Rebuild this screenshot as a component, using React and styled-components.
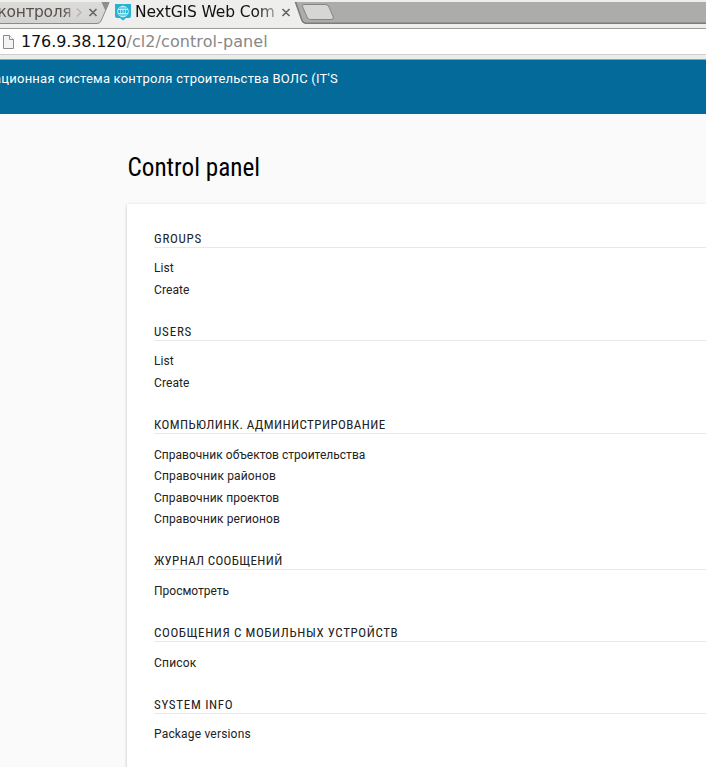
import React from "react";
import styled, { createGlobalStyle } from "styled-components";

const GlobalStyle = createGlobalStyle`
  * { box-sizing: border-box; }
  body { margin: 0; background: #fafafa; font-family: Roboto, sans-serif; overflow: hidden; }
`;

const Window = styled.div`
  width: 706px;
  height: 767px;
  overflow: hidden;
`;

const TabStrip = styled.div`
  position: relative;
  height: 28px;
  background: #eeeeed;
`;

const TabShapes = styled.svg`
  position: absolute;
  inset: 0;
  display: block;
`;

const TabTitle = styled.span`
  position: absolute;
  top: 2px;
  left: ${(p) => p.$left}px;
  width: ${(p) => p.$width}px;
  white-space: nowrap;
  font: 15.5px/20px "DejaVu Sans", sans-serif;
  letter-spacing: ${(p) => p.$spacing || 0}px;
  color: ${(p) => p.$color};
  mask-image: linear-gradient(to right, #000 calc(100% - ${(p) => p.$fade}px), rgba(0, 0, 0, 0.3));
`;

const AddressBar = styled.div`
  display: flex;
  align-items: center;
  height: 27px;
  padding-left: 2px;
  border-top: 1px solid #9b9b9a;
  border-bottom: 1px solid #cfcfce;
  background: #fff;
`;

const Url = styled.div`
  margin-left: 6px;
  font: 16px/24px "DejaVu Sans", sans-serif;
  letter-spacing: 0.08px;
  color: #888;
  white-space: nowrap;
`;

const Host = styled.span`
  letter-spacing: -0.12px;
  color: #111;
`;

const ChromeEdge = styled.div`
  height: 5px;
  background: #ececeb;
  border-bottom: 1px solid #a0a09f;
`;

const Header = styled.header`
  height: 54px;
  padding-top: 9px;
  background: #036a99;
  color: #fff;
  font-size: 13px;
  line-height: 20px;
  letter-spacing: 0.22px;
  white-space: nowrap;
`;

const HeaderTitle = styled.div`
  width: 338px;
  display: flex;
  justify-content: flex-end;
`;

const Title = styled.h1`
  margin: 0;
  padding: 36px 0 0 127.5px;
  height: 90px;
  font: 400 25.2px/36px "Roboto Condensed", Roboto, sans-serif;
  color: #000;
`;

const Card = styled.main`
  margin-left: 127px;
  height: 580px;
  padding: 23px 0 0 27px;
  background: #fff;
  box-shadow: 0 1px 3px rgba(0, 0, 0, 0.24);
`;

const Group = styled.section`
  height: ${(p) => Math.round(50 + p.$count * 21.6)}px;
`;

const GroupTitle = styled.h2`
  margin: 0;
  height: 21px;
  border-bottom: 1px solid #e6e8ea;
  font: 400 13px/23px "Roboto Condensed", Roboto, sans-serif;
  letter-spacing: ${(p) => p.$spacing}px;
  color: #222;
  white-space: nowrap;
`;

const List = styled.ul`
  margin: 0;
  padding: ${(p) => p.$gap}px 0 0;
  list-style: none;
`;

const Item = styled.li`
  height: 21.6px;
  font-size: 12px;
  line-height: 23px;
  letter-spacing: ${(p) => p.$spacing}px;
  color: #222;
`;

const groups = [
  { title: "GROUPS", spacing: 0.72, gap: 9.2, items: [["List", 0.1], ["Create", 0.1]] },
  { title: "USERS", spacing: 0.8, gap: 9.2, items: [["List", 0.1], ["Create", 0.1]] },
  {
    title: "КОМПЬЮЛИНК. АДМИНИСТРИРОВАНИЕ",
    spacing: 0.43,
    gap: 9.6,
    items: [
      ["Справочник объектов строительства", 0.02],
      ["Справочник районов", 0.15],
      ["Справочник проектов", 0.06],
      ["Справочник регионов", 0.1],
    ],
  },
  { title: "ЖУРНАЛ СООБЩЕНИЙ", spacing: 0.34, gap: 9.6, items: [["Просмотреть", 0]] },
  { title: "СООБЩЕНИЯ С МОБИЛЬНЫХ УСТРОЙСТВ", spacing: 0.6, gap: 9.6, items: [["Список", 0.2]] },
  { title: "SYSTEM INFO", spacing: 0.7, gap: 9.2, items: [["Package versions", 0.18]] },
];

function BrowserTabs() {
  return (
    <TabStrip>
      <TabShapes width="706" height="28" viewBox="0 0 706 28">
        <defs>
          <linearGradient id="inactiveTab" x1="0" y1="0" x2="0" y2="1">
            <stop offset="0" stopColor="#dcdcdb" />
            <stop offset="1" stopColor="#d2d2d0" />
          </linearGradient>
        </defs>
        <path d="M0 2H109L101 21Q100 23.5 97 23.5H0Z" fill="url(#inactiveTab)" />
        <path d="M0 23.5H97Q100 23.5 101 21L109 2.5" fill="none" stroke="#8b8b89" />
        <path d="M101.500 2H109.500L105.500 11Z" fill="#8e8e8c" />
        <path d="M295 2H706V24H306Q303 24 302 21Z" fill="#acacaa" />
        <path d="M295.500 2L302 20.500Q303.300 23.200 306.500 23.200H706" fill="none" stroke="#7c7c7a" strokeWidth="1.6" />
        <path d="M304 4.500H325Q328 4.500 329 7L333.300 17Q334 19.500 331 19.500H310.500Q308 19.500 307 17L302.500 6.500Q302 4.500 304 4.500Z" fill="#d6d6d5" stroke="#858583" />
        <path d="M115 4H131V16Q131 18 129 18H126L123 20.500L120 18H117Q115 18 115 16Z" fill="#27b1d3" />
        <g fill="none" stroke="#bdf0fa" strokeWidth="1">
          <circle cx="123" cy="11.500" r="5.300" />
          <ellipse cx="123" cy="11.500" rx="2.400" ry="5.300" />
          <path d="M118 9.500H128M118 13.500H128M123 6V17" />
        </g>
        <path d="M77 8.500Q79 11 81 12.500Q79 14 77 16.500" fill="none" stroke="#b9b1aa" strokeWidth="1.3" />
        <path d="M89.500 9L96.500 16M96.500 9L89.500 16M282.500 9L289.500 16M289.500 9L282.500 16" stroke="#666" strokeWidth="1.7" />
      </TabShapes>
      <TabTitle $left={-2.5} $width={76} $fade={10} $spacing={-0.35} $color="#57504d">контроля</TabTitle>
      <TabTitle $left={135} $width={141} $fade={20} $spacing={-0.12} $color="#111">NextGIS Web Com</TabTitle>
    </TabStrip>
  );
}

function PageIcon() {
  return (
    <svg width="13" height="16" viewBox="0 0 13 16">
      <path d="M1.500 1.500H7.500L11.500 5.500V14.500H1.500Z" fill="#f4f4f4" stroke="#8c8c8c" />
      <path d="M7.500 1.500V5.500H11.500" fill="#fff" stroke="#8c8c8c" />
    </svg>
  );
}

export default function App() {
  return (
    <Window>
      <GlobalStyle />
      <BrowserTabs />
      <AddressBar>
        <PageIcon />
        <Url><Host>176.9.38.120</Host>/cl2/control-panel</Url>
      </AddressBar>
      <ChromeEdge />
      <Header>
        <HeaderTitle>ационная система контроля строительства ВОЛС (IT'S</HeaderTitle>
      </Header>
      <Title>Control panel</Title>
      <Card>
        {groups.map((g) => (
          <Group key={g.title} $count={g.items.length}>
            <GroupTitle $spacing={g.spacing}>{g.title}</GroupTitle>
            <List $gap={g.gap}>
              {g.items.map(([label, spacing]) => (
                <Item key={label} $spacing={spacing}>{label}</Item>
              ))}
            </List>
          </Group>
        ))}
      </Card>
    </Window>
  );
}
